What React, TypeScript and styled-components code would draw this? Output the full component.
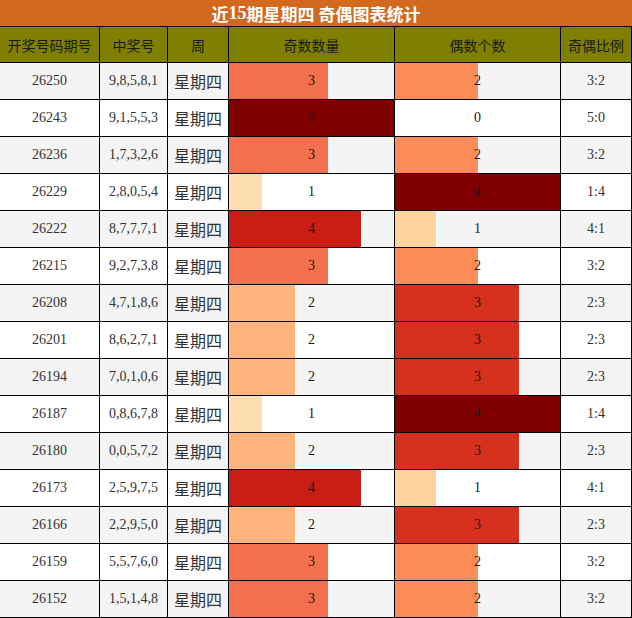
import React from "react";
import styled, { createGlobalStyle } from "styled-components";

const Global = createGlobalStyle`
  html, body { margin: 0; padding: 0; background: #fff; }
  * { box-sizing: border-box; }
`;

const SERIF = `"Liberation Serif", "Noto Sans CJK SC", serif`;
const SANS = `"Noto Sans CJK SC", "Noto Sans", sans-serif`;

const Wrap = styled.div`
  width: 632px;
  display: flex;
  flex-direction: column;
`;

const Title = styled.div`
  height: 27px;
  background: #d2691e;
  border-bottom: 1px solid #000;
  color: #fff;
  font-family: ${SERIF};
  font-weight: bold;
  font-size: 18px;
  display: flex;
  align-items: center;
  justify-content: center;
`;

const TitleCjk = styled.span`
  font-family: ${SANS};
  font-weight: bold;
  font-size: 17px;
`;

const Grid = styled.div`
  display: grid;
  grid-template-columns: 100px 68px 61px 166px 166px 71px;
`;

const HeadCell = styled.div`
  height: 36px;
  background: #808000;
  border-right: 1px solid #000;
  border-bottom: 1px solid #000;
  color: #1a1a1a;
  font-family: ${SANS};
  font-size: 14px;
  display: flex;
  align-items: center;
  justify-content: center;
`;

const Cell = styled.div<{ $alt: boolean; $cjk?: boolean }>`
  position: relative;
  height: 37px;
  background: ${(p) => (p.$alt ? "#f4f4f4" : "#ffffff")};
  border-right: 1px solid #000;
  border-bottom: 1px solid #000;
  color: #333;
  font-family: ${(p) => (p.$cjk ? SANS : SERIF)};
  font-size: ${(p) => (p.$cjk ? "16px" : "14px")};
  display: flex;
  align-items: center;
  justify-content: center;
  overflow: hidden;
`;

const Bar = styled.div<{ $color: string }>`
  position: absolute;
  left: 0;
  top: 0;
  bottom: 0;
  background: ${(p) => p.$color};
  box-shadow: 1px 0 0 rgba(255, 255, 255, 0.5);
`;

const BarValue = styled.span`
  position: relative;
  color: #1a1a1a;
`;

const ODD_COLORS = ["transparent", "#fddeb0", "#fdb57d", "#f3704f", "#c81e14", "#800000"];
const EVEN_COLORS = ["transparent", "#fdd49e", "#fc8d59", "#d7301f", "#7f0000", "#7f0000"];

type Row = { id: string; nums: string; odd: number };

const rows: Row[] = [
  { id: "26250", nums: "9,8,5,8,1", odd: 3 },
  { id: "26243", nums: "9,1,5,5,3", odd: 5 },
  { id: "26236", nums: "1,7,3,2,6", odd: 3 },
  { id: "26229", nums: "2,8,0,5,4", odd: 1 },
  { id: "26222", nums: "8,7,7,7,1", odd: 4 },
  { id: "26215", nums: "9,2,7,3,8", odd: 3 },
  { id: "26208", nums: "4,7,1,8,6", odd: 2 },
  { id: "26201", nums: "8,6,2,7,1", odd: 2 },
  { id: "26194", nums: "7,0,1,0,6", odd: 2 },
  { id: "26187", nums: "0,8,6,7,8", odd: 1 },
  { id: "26180", nums: "0,0,5,7,2", odd: 2 },
  { id: "26173", nums: "2,5,9,7,5", odd: 4 },
  { id: "26166", nums: "2,2,9,5,0", odd: 2 },
  { id: "26159", nums: "5,5,7,6,0", odd: 3 },
  { id: "26152", nums: "1,5,1,4,8", odd: 3 },
];

const BAR_WIDTH = 165;
const ODD_MAX = Math.max(...rows.map((r) => r.odd));
const EVEN_MAX = Math.max(...rows.map((r) => 5 - r.odd));

function BarCell({
  value,
  max,
  colors,
  alt,
}: {
  value: number;
  max: number;
  colors: string[];
  alt: boolean;
}) {
  return (
    <Cell $alt={alt}>
      {value > 0 && (
        <Bar $color={colors[value]} style={{ width: `${Math.round((value / max) * BAR_WIDTH)}px` }} />
      )}
      <BarValue>{value}</BarValue>
    </Cell>
  );
}

export default function App() {
  return (
    <Wrap>
      <Global />
      <Title>
        <TitleCjk>近</TitleCjk>15<TitleCjk>期星期四 奇偶图表统计</TitleCjk>
      </Title>
      <Grid>
        <HeadCell>开奖号码期号</HeadCell>
        <HeadCell>中奖号</HeadCell>
        <HeadCell>周</HeadCell>
        <HeadCell>奇数数量</HeadCell>
        <HeadCell>偶数个数</HeadCell>
        <HeadCell>奇偶比例</HeadCell>
        {rows.map((r, i) => {
          const alt = i % 2 === 0;
          const even = 5 - r.odd;
          return (
            <React.Fragment key={r.id}>
              <Cell $alt={alt}>{r.id}</Cell>
              <Cell $alt={alt}>{r.nums}</Cell>
              <Cell $alt={alt} $cjk>星期四</Cell>
              <BarCell value={r.odd} max={ODD_MAX} colors={ODD_COLORS} alt={alt} />
              <BarCell value={even} max={EVEN_MAX} colors={EVEN_COLORS} alt={alt} />
              <Cell $alt={alt}>{`${r.odd}:${even}`}</Cell>
            </React.Fragment>
          );
        })}
      </Grid>
    </Wrap>
  );
}
